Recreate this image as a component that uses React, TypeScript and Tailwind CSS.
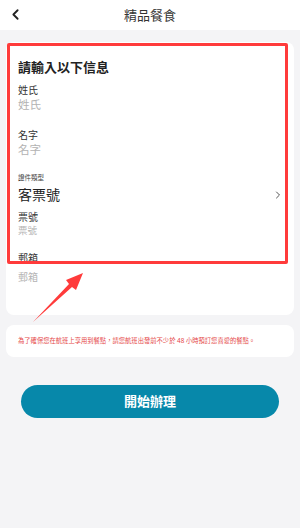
import { ChevronLeft, ChevronRight } from "lucide-react";

const font = { fontFamily: '"Noto Sans", "Noto Sans CJK TC", sans-serif' };

const App = () => {
  return (
    <div className="relative w-[300px] h-[528px] bg-[#f4f4f6] overflow-hidden" style={font}>
      {/* Header */}
      <div className="relative h-[30px] bg-white flex items-center justify-center">
        <ChevronLeft className="absolute left-[7px] top-[6px] h-[17px] w-[17px] text-[#222]" strokeWidth={2.6} />
        <span className="text-[13px] text-[#333] leading-none">精品餐食</span>
      </div>

      {/* Form card */}
      <div className="mx-[6px] mt-[12px] bg-white rounded-[8px] pl-[12px] pr-[14px] pt-[16px] pb-[30px]">
        <div className="text-[13px] leading-[18px] font-bold text-[#222]">請輸入以下信息</div>

        <div className="mt-[7px] text-[10px] leading-[14px] text-[#333]">姓氏</div>
        <div className="text-[11.5px] leading-[16px] text-[#b3b3b3]">姓氏</div>

        <div className="mt-[15px] text-[10px] leading-[14px] text-[#333]">名字</div>
        <div className="text-[11.5px] leading-[16px] text-[#b3b3b3]">名字</div>

        <div className="mt-[15px] text-[6.5px] leading-[10px] text-[#444]">證件類型</div>
        <div className="mt-[2px] flex items-center justify-between">
          <span className="text-[14px] leading-[20px] text-[#222]">客票號</span>
          <ChevronRight className="h-[12px] w-[12px] text-[#555] -mr-[4px]" strokeWidth={2} />
        </div>

        <div className="mt-[5px] text-[10px] leading-[14px] text-[#333]">票號</div>
        <div className="text-[9.5px] leading-[14px] text-[#b3b3b3]">票號</div>

        <div className="mt-[13px] text-[10px] leading-[14px] text-[#333]">郵箱</div>
        <div className="mt-[4px] text-[10px] leading-[16px] text-[#b3b3b3]">郵箱</div>
      </div>

      {/* Notice */}
      <div className="mx-[6px] mt-[10px] h-[32px] bg-white rounded-[8px] flex items-center pl-[12px]">
        <span className="text-[6.3px] leading-none text-[#e54848] whitespace-nowrap">
          為了確保您在航班上享用到餐點，請您航班出發前不少於 48 小時預訂您喜愛的餐點。
        </span>
      </div>

      {/* Button */}
      <div className="mx-[21px] mt-[28px] h-[33px] rounded-full bg-[#0788aa] flex items-center justify-center">
        <span className="text-[13px] font-bold text-white leading-none">開始辦理</span>
      </div>

      {/* Red annotation box */}
      <div className="absolute left-[7px] top-[43px] w-[281px] h-[221px] border-[3px] border-[#ff3b3b] rounded-[2px] pointer-events-none" />

      {/* Red arrow */}
      <svg className="absolute left-0 top-0 pointer-events-none" width="300" height="528" viewBox="0 0 300 528">
        <polygon points="33,322 69,284 66,280 83,273 76,290 72,287" fill="#ff3b3b" />
      </svg>
    </div>
  );
};

export default App;
